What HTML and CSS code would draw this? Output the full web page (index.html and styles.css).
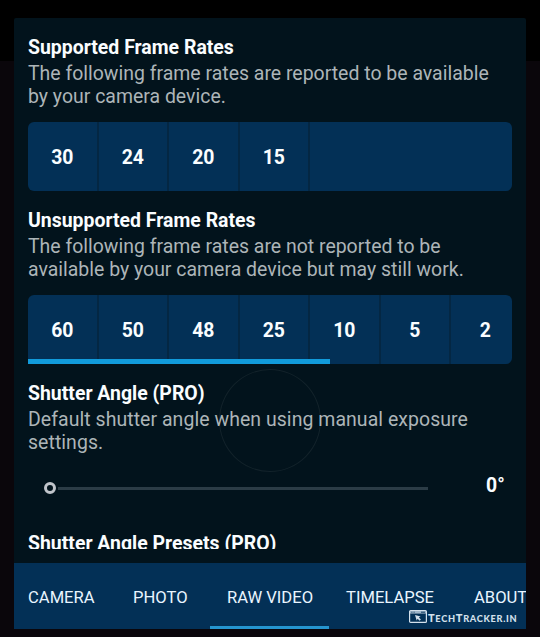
FILE: index.html
```html
<!DOCTYPE html>
<html lang="en">
<head>
<meta charset="utf-8">
<title>Camera settings</title>
<link rel="stylesheet" href="styles.css">
</head>
<body>
<div class="panel">
  <main class="content">
    <section class="section">
      <h2>Supported Frame Rates</h2>
      <p>The following frame rates are reported to be available<br>by your camera device.</p>
      <div class="rates"><span>30</span><span>24</span><span>20</span><span>15</span></div>
    </section>
    <section class="section">
      <h2>Unsupported Frame Rates</h2>
      <p>The following frame rates are not reported to be<br>available by your camera device but may still work.</p>
      <div class="rates scrolled"><span>60</span><span>50</span><span>48</span><span>25</span><span>10</span><span>5</span><span>2</span></div>
    </section>
    <section class="section angle">
      <h2>Shutter Angle (PRO)</h2>
      <p>Default shutter angle when using manual exposure<br>settings.</p>
      <div class="slider"><i class="knob"></i><i class="track"></i><b>0°</b></div>
      <div class="ring"></div>
    </section>
    <h2 class="cut">Shutter Angle Presets (PRO)</h2>
  </main>
  <nav class="tabs">
    <span class="camera">CAMERA</span><span class="photo">PHOTO</span><span class="active">RAW VIDEO</span><span class="timelapse">TIMELAPSE</span><span class="about">ABOUT</span>
  </nav>
  <div class="watermark">
    <svg width="18" height="13" viewBox="0 0 18 13"><rect x=".6" y=".6" width="16.8" height="11.8" rx="1" fill="none" stroke="#d3e0ec" stroke-width="1.2"/><path d="M1 2.3h16" stroke="#9fb6ca" stroke-width="2.6"/><path d="M2.4 2.2h1M4.6 2.2h1M12 2.2h4" stroke="#033056" stroke-width=".9"/><path d="M6 5l5.6 1.6-1.7 1 2 2-1.3 1.2-2-2-.9 1.7z" fill="#d3e0ec"/></svg>
    <span class="brand">T<small>ECH</small>T<small>RACKER.IN</small></span>
  </div>
</div>
</body>
</html>
```
FILE: styles.css
```css
* { box-sizing: border-box; }
body {
  margin: 0;
  width: 540px;
  height: 637px;
  padding: 18px 14px 8px;
  overflow: hidden;
  background: linear-gradient(#000 0 61px, #0a060b 61px);
  font-family: Roboto, sans-serif;
}
.panel {
  position: relative;
  display: flex;
  flex-direction: column;
  height: 611px;
  background: #02131c;
  overflow: hidden;
  border-radius: 2px 2px 0 0;
}
.content {
  height: 531px;
  margin-bottom: 14px;
  padding: 18px 14px 0;
  overflow: hidden;
}
.section { height: 173px; position: relative; }
.angle { height: 150px; z-index: 0; }
h2 {
  margin: 0 0 3px;
  font-size: 19.45px;
  line-height: 23px;
  font-weight: 700;
  color: #fafdff;
  white-space: nowrap;
}
p {
  margin: 0 0 14px;
  font-size: 19.47px;
  line-height: 23px;
  color: #adb5b8;
  white-space: nowrap;
}
.angle p { letter-spacing: .06px; }
.rates {
  position: relative;
  display: flex;
  height: 69px;
  border-radius: 6px;
  overflow: hidden;
  background: #033056;
}
.rates span {
  flex: 0 0 70.5px;
  border-right: 2px solid #042743;
  text-align: center;
  font-size: 19.4px;
  line-height: 72px;
  font-weight: 700;
  color: #fafdff;
}
.scrolled { border-radius: 6px 6px 6px 0; }
.scrolled::after {
  content: "";
  position: absolute;
  left: 0;
  bottom: 0;
  width: 302px;
  height: 5px;
  background: #119bdb;
}
.slider { display: flex; align-items: center; height: 24px; margin-top: 22px; padding-left: 16px; }
.knob { width: 12px; height: 12px; border: 3px solid #c0c4ca; border-radius: 50%; }
.track { width: 370px; height: 3px; margin-left: 2px; background: #2b3c46; }
.slider b { margin: -5px 0 0 58px; font-size: 19.4px; line-height: 23px; color: #fafdff; }
.ring {
  position: absolute;
  z-index: -1;
  left: 191px;
  top: -13px;
  width: 102px;
  height: 103px;
  border: 1px solid #12222a;
  border-radius: 50%;
}
.tabs {
  display: flex;
  height: 66px;
  background: #033056;
  color: #e9f5ff;
  font-size: 16.6px;
  line-height: 70px;
  white-space: nowrap;
}
.tabs span { flex: none; }
.camera { width: 91px; padding-left: 14px; }
.photo { width: 105px; padding-left: 28px; }
.active { width: 119px; padding-left: 1px; text-align: center; border-bottom: 3px solid #2595cf; }
.timelapse { width: 145px; padding-left: 17px; }
.watermark { position: absolute; left: 395px; top: 592px; display: flex; align-items: flex-start; gap: 1px; }
.brand { color: #d3e0ec; font: 900 11px/15px Lato, sans-serif; letter-spacing: .7px; white-space: nowrap; }
.brand small { font-size: 9.2px; }
```
